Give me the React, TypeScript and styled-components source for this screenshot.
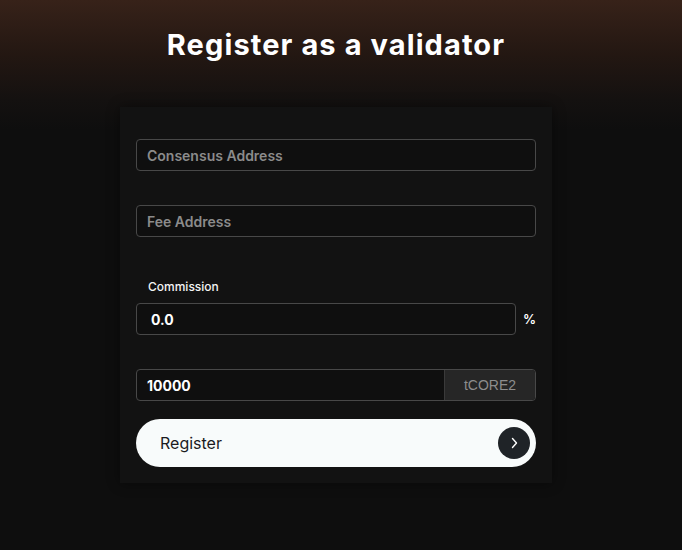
import React from "react";
import styled, { createGlobalStyle } from "styled-components";

const Global = createGlobalStyle`
  html, body { margin: 0; padding: 0; background: #0e0e0e; }
  body { font-family: Inter, "Noto Sans", sans-serif; }
  * { box-sizing: border-box; }
`;

const Page = styled.div`
  width: 682px;
  height: 550px;
  padding-right: 10px;
  background: linear-gradient(180deg, #372219 0px, #231712 55px, #141110 100px, #0e0e0e 130px, #0e0e0e 100%);
  display: flex;
  flex-direction: column;
  align-items: center;
  overflow: hidden;
`;

const Title = styled.h1`
  margin: 27px 0 0;
  height: 36px;
  font-family: Inter, sans-serif;
  font-weight: 700;
  font-size: 29px;
  line-height: 36px;
  color: #ffffff;
  letter-spacing: 1.1px;
`;

const Card = styled.div`
  margin-top: 44px;
  width: 432px;
  background: #121212;
  box-shadow: 0 0 12px rgba(0, 0, 0, 0.45);
  padding: 32px 16px 16px;
  display: flex;
  flex-direction: column;
`;

const Field = styled.div<{ $mt?: number }>`
  margin-top: ${(p) => p.$mt ?? 0}px;
  display: flex;
  flex-direction: column;
`;

const Label = styled.div`
  font-family: Inter, sans-serif;
  font-size: 12px;
  font-weight: 500;
  line-height: 16px;
  color: #f4f4f4;
  padding-left: 12px;
  margin-bottom: 8px;
`;

const Row = styled.div`
  display: flex;
  align-items: center;
`;

const Box = styled.div`
  height: 32px;
  flex: 1 0 auto;
  display: flex;
  align-items: stretch;
  border: 1px solid #484848;
  border-radius: 4px;
  background: #0f0f0f;
  overflow: hidden;
`;

const Text = styled.div<{ $muted?: boolean; $pl?: number }>`
  flex: 1;
  display: flex;
  align-items: center;
  padding-left: ${(p) => p.$pl ?? 10}px;
  font-family: Inter, sans-serif;
  font-size: 14px;
  font-weight: ${(p) => (p.$muted ? 600 : 700)};
  color: ${(p) => (p.$muted ? "#8b8b8b" : "#ffffff")};
`;

const Addon = styled.div`
  width: 91px;
  display: flex;
  align-items: center;
  justify-content: center;
  background: #262626;
  border-left: 1px solid #3a3a3a;
  font-family: "Liberation Sans", Arial, sans-serif;
  font-size: 14px;
  color: #8d8d8d;
`;

const Suffix = styled.div`
  width: 20px;
  text-align: right;
  font-family: Inter, sans-serif;
  font-weight: 600;
  font-size: 13px;
  color: #ffffff;
`;

const Button = styled.button`
  margin-top: 18px;
  height: 48px;
  border: none;
  border-radius: 24px;
  background: #f8fbfb;
  display: flex;
  align-items: center;
  justify-content: space-between;
  padding: 0 6px 0 24px;
  font-family: Inter, sans-serif;
  font-size: 16px;
  font-weight: 400;
  color: #1b1b1f;
  cursor: pointer;
`;

const Circle = styled.span`
  width: 32px;
  height: 32px;
  border-radius: 50%;
  background: #1f2327;
  display: flex;
  align-items: center;
  justify-content: center;
`;

export default function App() {
  return (
    <Page>
      <Global />
      <Title>Register as a validator</Title>
      <Card>
        <Field>
          <Box>
            <Text $muted>Consensus Address</Text>
          </Box>
        </Field>
        <Field $mt={34}>
          <Box>
            <Text $muted>Fee Address</Text>
          </Box>
        </Field>
        <Field $mt={42}>
          <Label>Commission</Label>
          <Row>
            <Box>
              <Text $pl={14}>0.0</Text>
            </Box>
            <Suffix>%</Suffix>
          </Row>
        </Field>
        <Field $mt={34}>
          <Box>
            <Text>10000</Text>
            <Addon>tCORE2</Addon>
          </Box>
        </Field>
        <Button>
          Register
          <Circle>
            <svg width="14" height="14" viewBox="0 0 14 14" fill="none">
              <path d="M5.5 2.5 L9.5 7 L5.5 11.5" stroke="#ffffff" strokeWidth="1.4" strokeLinecap="round" strokeLinejoin="round" />
            </svg>
          </Circle>
        </Button>
      </Card>
    </Page>
  );
}
